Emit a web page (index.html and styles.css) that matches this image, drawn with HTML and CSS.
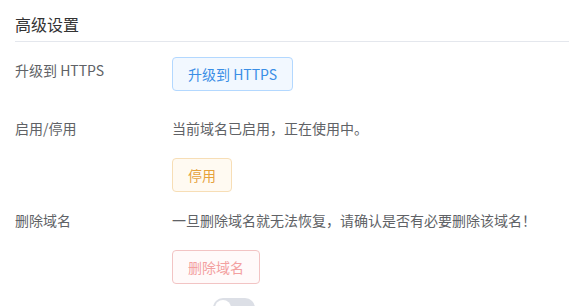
FILE: index.html
```html
<!DOCTYPE html>
<html lang="zh-CN">

<head>
  <meta charset="UTF-8">
  <meta name="viewport" content="width=device-width, initial-scale=1.0">
  <title>高级设置</title>
  <link rel="stylesheet" href="styles.css">
</head>

<body>
  <div class="panel">
    <h3 class="title">高级设置</h3>

    <div class="row row-https">
      <div class="label">升级到 HTTPS</div>
      <div class="content">
        <button class="btn btn-primary">升级到 HTTPS</button>
      </div>
    </div>

    <div class="row row-status">
      <div class="label">启用/停用</div>
      <div class="content">
        <p class="desc">当前域名已启用，正在使用中。</p>
        <button class="btn btn-warning">停用</button>
      </div>
    </div>

    <div class="row row-delete">
      <div class="label">删除域名</div>
      <div class="content">
        <p class="desc">一旦删除域名就无法恢复，请确认是否有必要删除该域名！</p>
        <button class="btn btn-danger" disabled>删除域名</button>
      </div>
    </div>

    <div class="row row-switch">
      <div class="label"></div>
      <div class="content">
        <span class="switch"><span class="knob"></span></span>
      </div>
    </div>
  </div>
</body>

</html>
```

FILE: styles.css
```css
* {
  margin: 0;
  padding: 0;
  box-sizing: border-box;
}

html,
body {
  width: 100%;
  height: 100%;
  overflow: hidden;
  background: #fff;
}

body {
  font-family: "Noto Sans CJK SC", "Noto Sans", sans-serif;
  font-size: 14px;
  color: #606266;
}

.panel {
  padding-left: 15px;
}

.title {
  margin-top: 12px;
  padding-bottom: 5px;
  font-size: 16px;
  line-height: 24px;
  font-weight: normal;
  color: #333;
  border-bottom: 1px solid #e4e7ed;
}

.row {
  display: grid;
  grid-template-columns: 157px 1fr;
}

.row-https {
  margin-top: 15px;
}

.row-status {
  margin-top: 27px;
}

.row-delete {
  margin-top: 18px;
}

.row-switch {
  margin-top: 14px;
}

.label {
  line-height: 20px;
}

.row-https .label {
  padding-top: 3px;
}

.desc {
  line-height: 20px;
  margin-bottom: 20px;
}

.btn {
  display: inline-block;
  font-family: inherit;
  font-size: 14px;
  line-height: 14px;
  padding: 9px 15px;
  border: 1px solid #dcdfe6;
  border-radius: 4px;
  background: #fff;
  font-weight: normal;
}

.btn-primary {
  color: #3a8ee6;
  background: #f2f8ff;
  border-color: #b3d8ff;
}

.btn-warning {
  color: #e6a23c;
  background: #fffaf2;
  border-color: #f7deb6;
}

.btn-danger {
  color: #f3a0a0;
  background: #fffafa;
  border-color: #f2c4c4;
}

.switch {
  display: inline-block;
  position: relative;
  margin-left: 41px;
  width: 42px;
  height: 20px;
  border-radius: 10px;
  background: #dcdfe6;
}

.knob {
  position: absolute;
  top: 2px;
  left: 2px;
  width: 16px;
  height: 16px;
  border-radius: 50%;
  background: #fff;
}
```
